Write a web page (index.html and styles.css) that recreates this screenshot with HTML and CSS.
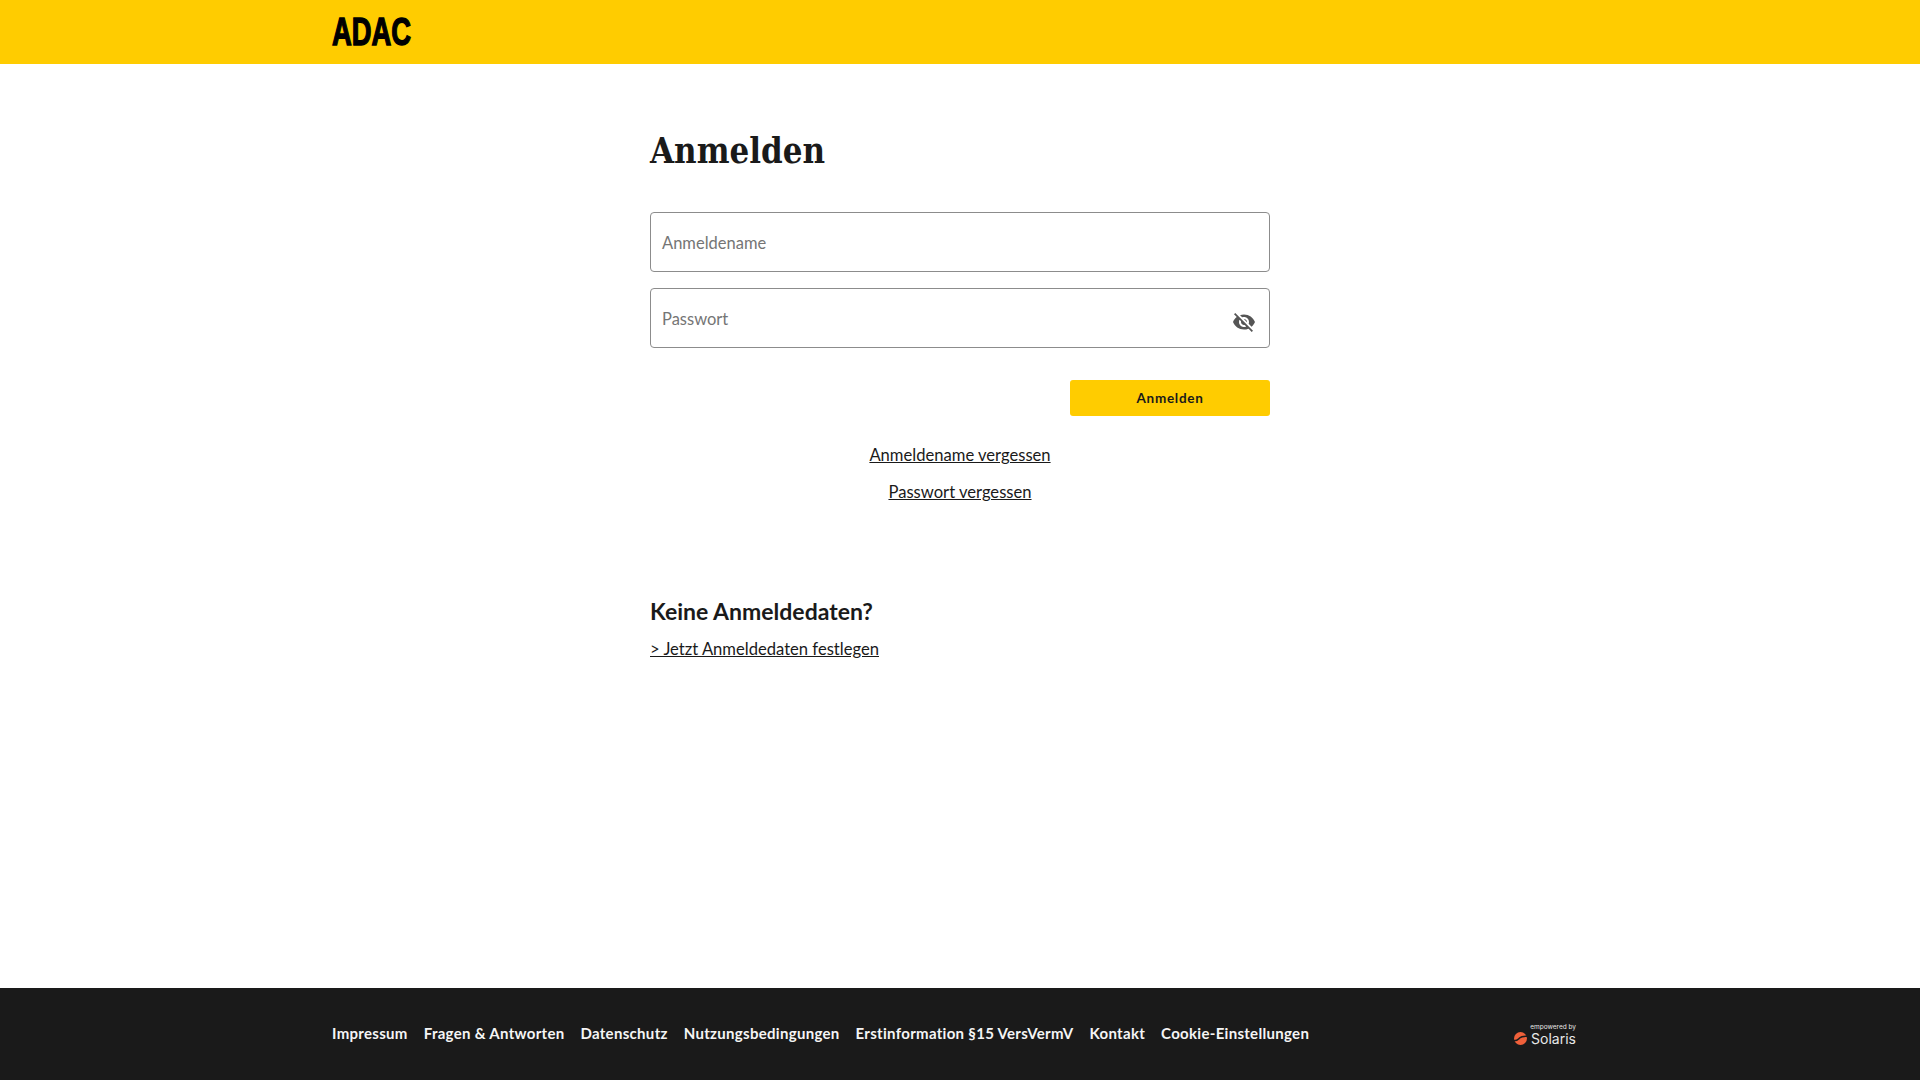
FILE: index.html
```html
<!DOCTYPE html>
<html lang="de">
<head>
  <meta charset="UTF-8" />
  <title>Anmelden</title>
  <link rel="stylesheet" href="styles.css">
</head>
<body>

<header class="topbar">
  <div class="wrap">
    <span class="logo">ADAC</span>
  </div>
</header>

<main class="content">
  <div class="login">
    <h1>Anmelden</h1>

    <div class="field">
      <span class="placeholder">Anmeldename</span>
    </div>
    <div class="field">
      <span class="placeholder">Passwort</span>
      <svg class="eye" viewBox="0 0 24 24" width="24" height="24">
        <path d="M12 7c2.76 0 5 2.24 5 5 0 .65-.13 1.26-.36 1.83l2.92 2.92c1.51-1.26 2.7-2.89 3.43-4.75-1.73-4.39-6-7.5-11-7.5-1.4 0-2.74.25-3.98.7l2.16 2.16C10.74 7.13 11.35 7 12 7zM2 4.27l2.28 2.28.46.46C3.08 8.3 1.78 10.02 1 12c1.73 4.39 6 7.5 11 7.5 1.55 0 3.03-.3 4.38-.84l.42.42L19.73 22 21 20.73 3.27 3 2 4.27zM7.53 9.8l1.55 1.55c-.05.21-.08.43-.08.65 0 1.66 1.34 3 3 3 .22 0 .44-.03.65-.08l1.55 1.55c-.67.33-1.41.53-2.2.53-2.76 0-5-2.24-5-5 0-.79.2-1.53.53-2.2zm4.31-.78l3.15 3.15.02-.16c0-1.66-1.34-3-3-3l-.17.01z"/>
      </svg>
    </div>

    <div class="actions">
      <button>Anmelden</button>
    </div>

    <div class="links">
      <a href="#">Anmeldename vergessen</a>
      <a href="#">Passwort vergessen</a>
    </div>

    <h2>Keine Anmeldedaten?</h2>
    <a class="setup" href="#">&gt; Jetzt Anmeldedaten festlegen</a>
  </div>
</main>

<footer class="footer">
  <div class="wrap footer-row">
    <nav class="footer-links">
      <a href="#">Impressum</a>
      <a href="#">Fragen &amp; Antworten</a>
      <a href="#">Datenschutz</a>
      <a href="#">Nutzungsbedingungen</a>
      <a href="#">Erstinformation §15 VersVermV</a>
      <a href="#">Kontakt</a>
      <a href="#">Cookie-Einstellungen</a>
    </nav>
    <div class="solaris">
      <span class="solaris-small">empowered by</span>
      <div class="solaris-name">
        <svg viewBox="0 0 14 14" width="13" height="13">
          <circle cx="7" cy="7" r="7" fill="#f0603a"/>
          <path d="M0 9.500C4 9.500 4.500 8 6 6.500S10 4.500 14 4.500" fill="none" stroke="#1a1a1a" stroke-width="1.600"/>
        </svg>
        <span>Solaris</span>
      </div>
    </div>
  </div>
</footer>

</body>
</html>
```

FILE: styles.css
```css
body {
  margin: 0;
  min-height: 100vh;
  display: flex;
  flex-direction: column;
  font-family: Lato, sans-serif;
  color: #1a1a1a;
  background: #fff;
}

.wrap {
  width: 1256px;
  margin: 0 auto;
}

.topbar {
  height: 64px;
  background: #ffcc00;
  display: flex;
  align-items: center;
}

.logo {
  display: block;
  width: 110px;
  font-family: "Liberation Sans", sans-serif;
  font-weight: bold;
  font-size: 38px;
  line-height: 64px;
  color: #000;
  -webkit-text-stroke: 1.4px #000;
  transform: scaleX(0.72);
  transform-origin: left center;
}

.content {
  flex: 1;
  display: flex;
  justify-content: center;
}

.login {
  width: 620px;
  display: flex;
  flex-direction: column;
}

h1 {
  margin: 64px 0 38px;
  font-family: "DejaVu Serif", serif;
  font-stretch: condensed;
  font-weight: bold;
  font-size: 34.5px;
  line-height: 46px;
}

.field {
  position: relative;
  box-sizing: border-box;
  height: 60px;
  margin-bottom: 16px;
  padding: 1px 11px 0;
  border: 1px solid #8c8c8c;
  border-radius: 4px;
  display: flex;
  align-items: center;
}

.placeholder {
  font-size: 16.5px;
  color: #757575;
}

.eye {
  position: absolute;
  right: 13px;
  top: 21px;
  fill: #555;
}

.actions {
  display: flex;
  justify-content: flex-end;
  margin-top: 16px;
}

.actions button {
  width: 200px;
  height: 36px;
  padding-bottom: 2px;
  border: none;
  border-radius: 3px;
  background: #ffcc00;
  color: #1a1a1a;
  font-family: Lato, sans-serif;
  font-weight: 700;
  font-size: 13.5px;
  letter-spacing: 0.7px;
}

.links {
  display: flex;
  flex-direction: column;
  align-items: center;
  gap: 13px;
  margin-top: 27px;
}

a {
  color: #1a1a1a;
}

.links a,
.setup {
  font-size: 16.6px;
  line-height: 24px;
}

h2 {
  margin: 92px 0 11px;
  font-weight: 700;
  font-size: 23px;
  line-height: 30px;
}

.footer {
  height: 92px;
  background: #1a1a1a;
  display: flex;
  align-items: center;
}

.footer-row {
  display: flex;
  justify-content: space-between;
  align-items: center;
}

.footer-links {
  display: flex;
  gap: 16px;
  padding-bottom: 2px;
}

.footer-links a {
  color: #f5f5f5;
  font-size: 15px;
  font-weight: 700;
  letter-spacing: 0.3px;
  text-decoration: none;
}

.solaris {
  display: flex;
  flex-direction: column;
  align-items: flex-end;
  color: #e8e8e8;
  margin: 1px 12px 0 0;
}

.solaris-small {
  font-family: Inter, sans-serif;
  font-size: 6.5px;
  line-height: 8px;
}

.solaris-name {
  display: flex;
  align-items: center;
  gap: 4px;
  font-family: Inter, sans-serif;
  font-size: 14px;
  line-height: 16px;
}
```
